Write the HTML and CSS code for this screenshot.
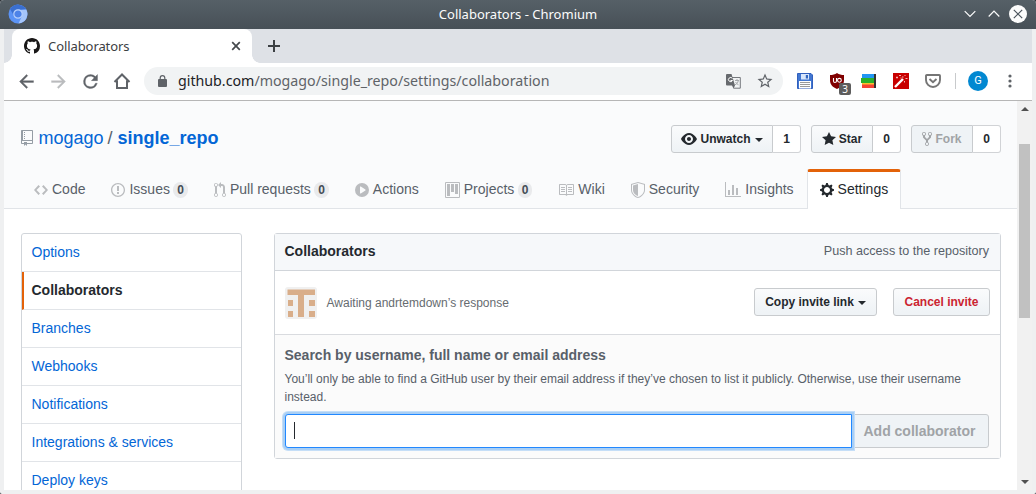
FILE: index.html
```html
<!DOCTYPE html>
<html lang="en">
<head>
<meta charset="utf-8">
<title>Collaborators</title>
<link rel="stylesheet" href="styles.css">
</head>
<body>
<div class="window">
  <header class="titlebar">
    <svg class="app-icon" width="20" height="20" viewBox="0 0 20 20"><circle cx="10" cy="10" r="9.5" fill="#5b93f5"/><path d="M2 5A9.500 9.500 0 0 1 18.300 5.500L10 5.500 5.800 11.500z" fill="#3a6fd0"/><path d="M18.300 5.500A9.500 9.500 0 0 1 10.500 19.500L14 12 13 6z" fill="#a5c5fa"/><circle cx="10" cy="10" r="4.200" fill="#4d83e8" stroke="#b8d0fb" stroke-width="1.200"/></svg>
    <span class="window-title">Collaborators - Chromium</span>
    <div class="window-controls">
      <svg width="12" height="8" viewBox="0 0 12 8"><path d="M.7 1.200L6 6.500l5.300-5.300" fill="none" stroke="#fcfcfc" stroke-width="1.200"/></svg>
      <svg width="12" height="8" viewBox="0 0 12 8"><path d="M.7 6.500L6 1.200l5.300 5.300" fill="none" stroke="#fcfcfc" stroke-width="1.200"/></svg>
      <svg width="18" height="18" viewBox="0 0 18 18"><circle cx="9" cy="9" r="9" fill="#fcfcfc"/><path d="M4.800 4.800l8.400 8.400M13.200 4.800l-8.400 8.400" stroke="#4b545c" stroke-width="1.200"/></svg>
    </div>
  </header>

  <div class="tabstrip">
    <div class="tab">
      <svg width="16" height="16" viewBox="0 0 16 16" fill="#191717"><path d="M8 0C3.580 0 0 3.580 0 8c0 3.540 2.290 6.530 5.470 7.590.4.070.55-.17.55-.38 0-.19-.01-.82-.01-1.490-2.010.37-2.530-.49-2.690-.94-.09-.23-.48-.94-.82-1.130-.28-.15-.68-.52-.01-.53.63-.01 1.080.58 1.230.82.72 1.210 1.870.87 2.330.66.070-.52.28-.87.51-1.070-1.780-.2-3.640-.89-3.640-3.950 0-.87.31-1.590.82-2.150-.08-.2-.36-1.020.08-2.120 0 0 .67-.21 2.200.82.64-.18 1.320-.27 2-.27s1.360.09 2 .27c1.530-1.040 2.200-.82 2.200-.82.44 1.100.16 1.920.08 2.120.51.56.82 1.270.82 2.150 0 3.070-1.870 3.750-3.650 3.950.29.25.54.73.54 1.480 0 1.070-.01 1.930-.01 2.200 0 .21.15.46.55.38A8.013 8.013 0 0 0 16 8c0-4.420-3.580-8-8-8z"/></svg>
      <span class="tab-title">Collaborators</span>
      <svg class="tab-close" width="10" height="10" viewBox="0 0 10 10"><path d="M1.200 1.200l7.600 7.600M8.800 1.200L1.200 8.800" stroke="#45494d" stroke-width="1.700"/></svg>
    </div>
    <svg class="new-tab" width="12" height="12" viewBox="0 0 12 12"><path d="M6 0v12M0 6h12" stroke="#3c4043" stroke-width="2"/></svg>
  </div>

  <div class="toolbar">
    <div class="tool"><svg width="21" height="21" viewBox="0 0 24 24" fill="#5f6368" stroke="#5f6368" stroke-width=".4"><path d="M20 11H7.830l5.590-5.590L12 4l-8 8 8 8 1.410-1.410L7.830 13H20v-2z"/></svg></div>
    <div class="tool"><svg width="21" height="21" viewBox="0 0 24 24" fill="#babcbe" stroke="#babcbe" stroke-width=".4"><path d="M12 4l-1.410 1.410L16.170 11H4v2h12.170l-5.580 5.590L12 20l8-8z"/></svg></div>
    <div class="tool"><svg width="21" height="21" viewBox="0 0 24 24" fill="#5f6368" stroke="#5f6368" stroke-width=".4"><path d="M17.650 6.350A7.960 7.960 0 0 0 12 4a8 8 0 1 0 7.730 10h-2.080A6 6 0 1 1 12 6c1.660 0 3.140.69 4.220 1.780L13 11h7V4l-2.350 2.350z"/></svg></div>
    <div class="tool"><svg width="18" height="18" viewBox="0 0 18 18" fill="none" stroke="#5f6368" stroke-width="2"><path d="M1.500 10L9 2.500l7.500 7.500M4 8.500V16h10V8.500"/></svg></div>
    <div class="omnibox">
      <svg width="9" height="12" viewBox="0 0 9 12"><rect y="4" width="9" height="8" rx="1" fill="#5f6368"/><path d="M2.200 5V3a2.300 2.300 0 0 1 4.600 0v2" fill="none" stroke="#5f6368" stroke-width="1.200"/></svg>
      <span class="url"><b>github.com</b>/mogago/single_repo/settings/collaboration</span>
      <svg class="translate" width="15" height="15" viewBox="0 0 15 15"><path d="M6 3.500h8.300v10.700H7.500" fill="#f1f3f4" stroke="#76797d"/><path d="M0 1a1 1 0 0 1 1-1h4.500L9 11.500H1a1 1 0 0 1-1-1zM6 11.500h3L7.500 14.500z" fill="#66696d"/><path d="M9 6.500h4M11 5v1.500m1.300 0C12 9 10.500 10 9 10.800M9.500 8l3 3.200" fill="none" stroke="#a5a8ab"/><path d="M6.400 4.500A2.100 2.100 0 1 0 6.500 6.500H4.500" fill="none" stroke="#fff"/></svg>
      <svg class="bookmark" width="18" height="18" viewBox="0 0 24 24" fill="#5f6368"><path d="M22 9.240l-7.190-.62L12 2 9.190 8.630 2 9.240l5.460 4.730L5.820 21 12 17.270 18.180 21l-1.630-7.030L22 9.240zM12 15.400l-3.760 2.270 1-4.280-3.320-2.880 4.380-.38L12 6.100l1.710 4.040 4.380.38-3.320 2.880 1 4.280L12 15.400z"/></svg>
    </div>
    <div class="extensions">
      <div class="tool"><svg width="16" height="16" viewBox="0 0 16 16"><path d="M.5.5H14l1.500 1.500v13.500H.5z" fill="#4277d1" stroke="#315fbd"/><path d="M4 1h8v5.500H4z" fill="#d8e6fb"/><path d="M8.800 2h2.200v3.500H8.800z" fill="#3265be"/><path d="M2 8h12v7.500H2z" fill="#fff"/><path d="M3 9.500h10M3 11.500h10M3 13.500h10" stroke="#9a9a9a"/></svg></div>
      <div class="tool ublock"><svg width="14" height="16" viewBox="0 0 14 16"><path d="M7 0c2 1.500 4.500 2 7 2v5c0 5-3 7.300-7 9C3 14.300 0 12 0 7V2c2.500 0 5-.5 7-2z" fill="#800000"/><path d="M3.500 5v3c0 1 .4 1.500 1.400 1.500S6.500 9 6.500 8V5" fill="none" stroke="#fff" stroke-width="1.100"/><circle cx="9.400" cy="7.300" r="1.900" fill="none" stroke="#fff" stroke-width="1.100"/></svg><span class="ext-badge">3</span></div>
      <div class="tool"><svg width="16" height="14" viewBox="0 0 16 14"><path d="M12 0h3v14h-3z" fill="#333"/><path d="M1 0h12v4H1z" fill="#2196f3"/><path d="M0 4h13v5H0z" fill="#2bb02b"/><path d="M1 9h12v2H1z" fill="#fbc02d"/><path d="M1 10.500h12V14H1z" fill="#f44336"/></svg></div>
      <div class="tool"><svg width="16" height="16" viewBox="0 0 16 16"><path d="M0 0h16v16H0z" fill="#c80000"/><path d="M2 14l8-8" stroke="#fff" stroke-width="2.400"/><path d="M3 4.500h2M4 3.500v2M6 2.500h2M9 4h1.500M11.500 2.500h1M12.500 5.500h2M11.500 8v1.500M7.500 5h1" stroke="#f4b3b3" stroke-width="1"/></svg></div>
      <div class="tool"><svg width="16" height="14" viewBox="0 0 16 14"><path d="M1 1.800C1 1.300 1.400 1 1.800 1h12.400c.5 0 .8.300.8.800V6a7 7 0 0 1-14 0z" fill="none" stroke="#757575" stroke-width="1.900"/><path d="M4.500 5L8 8.300 11.500 5" fill="none" stroke="#757575" stroke-width="1.900"/></svg></div>
    </div>
    <span class="tool-divider"></span>
    <span class="profile">G</span>
    <svg class="menu-dots" width="4" height="14" viewBox="0 0 4 14" fill="#5f6368"><circle cx="2" cy="2" r="1.600"/><circle cx="2" cy="7" r="1.600"/><circle cx="2" cy="12" r="1.600"/></svg>
  </div>

  <div class="viewport">
    <main class="page">
      <div class="repohead">
        <div class="repohead-top">
          <h1 class="repo-name"><svg width="12" height="16" viewBox="0 0 12 16"><path d="M4 9H3V8h1v1zm0-3H3v1h1V6zm0-2H3v1h1V4zm0-2H3v1h1V2zm8-1v12c0 .55-.45 1-1 1H6v2l-1.500-1.500L3 16v-2H1c-.55 0-1-.45-1-1V1c0-.55.45-1 1-1h10c.55 0 1 .45 1 1zm-1 10H1v2h2v-1h3v1h5v-2zm0-10H2v9h9V1z"/></svg><a>mogago</a><span class="slash">/</span><a class="repo">single_repo</a></h1>
          <div class="actions">
            <div class="btn-group watch"><button class="btn sm"><svg width="16" height="16" viewBox="0 0 16 16"><path fill-rule="evenodd" d="M8.060 2C3 2 0 8 0 8s3 6 8.060 6C13 14 16 8 16 8s-3-6-7.940-6zM8 12c-2.200 0-4-1.780-4-4 0-2.200 1.800-4 4-4 2.220 0 4 1.800 4 4 0 2.220-1.780 4-4 4zm2-4c0 1.110-.89 2-2 2-1.110 0-2-.89-2-2 0-1.110.89-2 2-2 1.110 0 2 .89 2 2z"/></svg>Unwatch<i class="caret"></i></button><span class="social-count">1</span></div>
            <div class="btn-group"><button class="btn sm"><svg width="14" height="16" viewBox="0 0 14 16"><path d="M14 6l-4.900-.64L7 1 4.900 5.360 0 6l3.600 3.260L2.670 14 7 11.670 11.330 14l-.93-4.740L14 6z"/></svg>Star</button><span class="social-count">0</span></div>
            <div class="btn-group"><button class="btn sm disabled"><svg width="10" height="16" viewBox="0 0 10 16"><path fill-rule="evenodd" d="M8 1a1.993 1.993 0 0 0-1 3.720V6L5 8 3 6V4.720A1.993 1.993 0 0 0 2 1a1.993 1.993 0 0 0-1 3.720V6.500l3 3v1.780A1.993 1.993 0 0 0 5 15a1.993 1.993 0 0 0 1-3.720V9.500l3-3V4.720A1.993 1.993 0 0 0 8 1zM2 4.200C1.340 4.200.8 3.650.8 3c0-.65.55-1.200 1.200-1.200.65 0 1.200.55 1.200 1.200 0 .65-.55 1.200-1.200 1.200zm3 10c-.66 0-1.200-.55-1.200-1.200 0-.65.55-1.200 1.200-1.200.65 0 1.200.55 1.200 1.200 0 .65-.55 1.200-1.200 1.200zm3-10c-.66 0-1.200-.55-1.200-1.200 0-.65.55-1.200 1.200-1.200.65 0 1.200.55 1.200 1.200 0 .65-.55 1.200-1.200 1.200z"/></svg>Fork</button><span class="social-count">0</span></div>
          </div>
        </div>
        <nav class="reponav">
          <a class="nav-item"><svg width="14" height="16" viewBox="0 0 14 16"><path d="M9.500 3L8 4.500 11.500 8 8 11.500 9.500 13 14 8 9.500 3zm-5 0L0 8l4.500 5L6 11.500 2.500 8 6 4.500 4.500 3z"/></svg><span>Code</span></a>
          <a class="nav-item"><svg width="14" height="16" viewBox="0 0 14 16"><path fill-rule="evenodd" d="M7 2.300c3.140 0 5.700 2.560 5.700 5.700s-2.560 5.700-5.700 5.700A5.710 5.710 0 0 1 1.300 8c0-3.140 2.560-5.700 5.700-5.700zM7 1C3.140 1 0 4.140 0 8s3.140 7 7 7 7-3.140 7-7-3.140-7-7-7zm1 3H6v5h2V4zm0 6H6v2h2v-2z"/></svg><span>Issues</span><span class="counter">0</span></a>
          <a class="nav-item"><svg width="12" height="16" viewBox="0 0 12 16"><path fill-rule="evenodd" d="M11 11.280V5c-.03-.78-.34-1.470-.94-2.060C9.460 2.350 8.780 2.030 8 2H7V0L4 3l3 3V4h1c.27.020.48.110.69.310.21.200.3.420.31.690v6.280A1.993 1.993 0 0 0 10 15a1.993 1.993 0 0 0 1-3.720zm-1 2.920c-.66 0-1.200-.55-1.200-1.200 0-.65.55-1.200 1.200-1.200.65 0 1.200.55 1.200 1.200 0 .65-.55 1.200-1.200 1.200zM4 3c0-1.110-.89-2-2-2a1.993 1.993 0 0 0-1 3.720v6.560A1.993 1.993 0 0 0 2 15a1.993 1.993 0 0 0 1-3.720V4.720c.59-.34 1-.98 1-1.720zm-.8 10c0 .66-.55 1.200-1.200 1.200-.65 0-1.200-.55-1.200-1.200 0-.65.55-1.200 1.200-1.200.65 0 1.200.55 1.200 1.200zM2 4.200C1.340 4.200.8 3.650.8 3c0-.65.55-1.200 1.200-1.200.65 0 1.200.55 1.200 1.200 0 .65-.55 1.200-1.200 1.200z"/></svg><span>Pull requests</span><span class="counter">0</span></a>
          <a class="nav-item"><svg width="14" height="16" viewBox="0 0 14 16"><path fill-rule="evenodd" d="M14 8A7 7 0 1 1 0 8a7 7 0 0 1 14 0zm-8.223 3.482l4.599-3.066a.5.5 0 0 0 0-.832L5.777 4.518A.5.5 0 0 0 5 4.934v6.132a.5.5 0 0 0 .777.416z"/></svg><span>Actions</span></a>
          <a class="nav-item"><svg width="15" height="16" viewBox="0 0 15 16"><path fill-rule="evenodd" d="M10 12h3V2h-3v10zm-4-2h3V2H6v8zm-4 4h3V2H2v12zm-1 1h13V1H1v14zM14 0H1a1 1 0 0 0-1 1v14a1 1 0 0 0 1 1h13a1 1 0 0 0 1-1V1a1 1 0 0 0-1-1z"/></svg><span>Projects</span><span class="counter">0</span></a>
          <a class="nav-item"><svg width="16" height="16" viewBox="0 0 16 16"><path fill-rule="evenodd" d="M3 5h4v1H3V5zm0 3h4V7H3v1zm0 2h4V9H3v1zm11-5h-4v1h4V5zm0 2h-4v1h4V7zm0 2h-4v1h4V9zm2-6v9c0 .55-.45 1-1 1H9.500l-1 1-1-1H2c-.55 0-1-.45-1-1V3c0-.55.45-1 1-1h5.500l1 1 1-1H15c.55 0 1 .45 1 1zm-8 .5L7.500 3H2v9h6V3.500zm7-.5H9.500l-.5.5V12h6V3z"/></svg><span>Wiki</span></a>
          <a class="nav-item"><svg width="14" height="16" viewBox="0 0 14 16"><path fill-rule="evenodd" d="M0 2l7-2 7 2v6.020C14 12.690 8.690 16 7 16c-1.690 0-7-3.310-7-7.980V2zm1 .75L7 1l6 1.750v5.268C13 12.104 8.449 15 7 15c-1.449 0-6-2.896-6-6.982V2.750zm1 .75L7 2v12c-1.207 0-5-2.482-5-5.985V3.500z"/></svg><span>Security</span></a>
          <a class="nav-item"><svg width="16" height="16" viewBox="0 0 16 16"><path d="M16 14v1H0V0h1v14h15zM5 13H3V8h2v5zm4 0H7V3h2v10zm4 0h-2V6h2v7z"/></svg><span>Insights</span></a>
          <a class="nav-item selected"><svg width="14" height="16" viewBox="0 0 14 16"><path fill-rule="evenodd" d="M14 8.770v-1.600l-1.940-.64-.45-1.090.88-1.840-1.130-1.130-1.810.91-1.090-.45-.69-1.920h-1.600l-.63 1.940-1.110.45-1.840-.88-1.130 1.130.91 1.810-.45 1.090L0 7.230v1.590l1.940.64.45 1.090-.88 1.840 1.130 1.130 1.810-.91 1.090.45.69 1.920h1.590l.63-1.940 1.110-.45 1.840.88 1.130-1.130-.92-1.810.47-1.090L14 8.750v.02zM7 11c-1.660 0-3-1.340-3-3s1.340-3 3-3 3 1.340 3 3-1.340 3-3 3z"/></svg><span>Settings</span></a>
        </nav>
      </div>

      <div class="columns">
        <nav class="side-menu">
          <a>Options</a>
          <a class="current">Collaborators</a>
          <a>Branches</a>
          <a>Webhooks</a>
          <a>Notifications</a>
          <a>Integrations &amp; services</a>
          <a>Deploy keys</a>
        </nav>
        <section class="box">
          <div class="box-header"><h3>Collaborators</h3><span>Push access to the repository</span></div>
          <div class="invite">
            <svg width="32" height="32" viewBox="0 0 32 32"><rect width="32" height="32" rx="3" fill="#f0f0f0"/><path d="M2.500 2.500h27.500v5.500H19v22h-6V8H2.500zM3 13h5v6H3zM24 13h6v6h-6zM3 24h5v6H3zM24 24h6v6h-6z" fill="#d9ae8a"/></svg>
            <span class="invite-text">Awaiting andrtemdown’s response</span>
            <button class="btn sm copy">Copy invite link<i class="caret"></i></button>
            <button class="btn sm danger">Cancel invite</button>
          </div>
          <div class="add-form">
            <h4>Search by username, full name or email address</h4>
            <p>You’ll only be able to find a GitHub user by their email address if they’ve chosen to list it publicly. Otherwise, use their username instead.</p>
            <div class="input-row"><div class="search-input"><i class="text-cursor"></i></div><button class="btn disabled add">Add collaborator</button></div>
          </div>
        </section>
      </div>
    </main>
    <div class="scrollbar">
      <i class="arrow up"></i>
      <i class="thumb"></i>
      <i class="arrow down"></i>
    </div>
  </div>
</div>
</body>
</html>
```

FILE: styles.css
```css
* { box-sizing: border-box; }
html { background: #30363b; }
body { margin: 0; font: 14px/21px "Liberation Sans", Arial, sans-serif; color: #24292e; overflow: hidden; }
svg { flex: none; display: block; }
button { margin: 0; }

.window { width: 1036px; height: 494px; display: flex; flex-direction: column; padding-bottom: 4px; background: #eff0f1; border-radius: 4px 4px 2px 2px; overflow: hidden; }

/* Window title bar */
.titlebar { height: 29px; flex: none; display: grid; grid-template-columns: 120px 1fr 120px; align-items: center; background: linear-gradient(#566067, #475057); color: #fcfcfc; font: 13px/18px "Noto Sans", sans-serif; }
.app-icon { margin: -1px 0 0 8px; }
.window-title { text-align: center; margin-top: -1px; }
.window-controls { display: flex; align-items: center; justify-content: flex-end; gap: 12px; padding-right: 9px; margin-top: -1px; }
.window-controls svg:last-child { margin-left: -3px; }

/* Tabs */
.tabstrip { height: 34px; flex: none; margin: 0 4px; padding-left: 8px; display: flex; align-items: center; background: #dee1e6; }
.tab { position: relative; width: 240px; height: 34px; display: flex; align-items: center; padding: 0 11px 0 12px; background: #fff; border-radius: 8px 8px 0 0; font: 13px/18px "Noto Sans", sans-serif; color: #3c4043; }
.tab::before, .tab::after { content: ""; position: absolute; bottom: 0; width: 8px; height: 8px; }
.tab::before { left: -8px; background: radial-gradient(circle at 0 0, transparent 7.500px, #fff 8px); }
.tab::after { right: -8px; background: radial-gradient(circle at 100% 0, transparent 7.500px, #fff 8px); }
.tab-title { margin-left: 8px; letter-spacing: -.08px; }
.tab-close { margin-left: auto; }
.new-tab { margin-left: 16px; }

/* Toolbar */
.toolbar { height: 38px; flex: none; margin: 0 4px; padding: 0 0 1px 6px; display: flex; align-items: center; background: #fff; border-bottom: 1px solid #b6b6b6; }
.tool { width: 32px; height: 28px; display: flex; align-items: center; justify-content: center; }
.omnibox { width: 639px; height: 28px; margin-left: 6px; padding: 0 9px 0 14px; display: flex; align-items: center; background: #f1f3f4; border-radius: 14px; font: 14.220px/20px "Noto Sans", sans-serif; color: #5f6368; }
.url { margin-left: 11px; white-space: nowrap; }
.url b { font-weight: 400; color: #202124; }
.translate { margin-left: auto; }
.bookmark { margin-left: 15px; }
.extensions { display: flex; margin-left: 6px; }
.ublock { position: relative; }
.ext-badge { position: absolute; left: 18px; top: 16px; width: 12px; height: 12px; border-radius: 2px; background: #5d5d5d; color: #fff; font: 10px/12px "Noto Sans", sans-serif; text-align: center; }
.tool-divider { width: 1px; height: 16px; margin-left: 6px; background: #c8cacc; }
.profile { width: 20px; height: 20px; margin-left: 12px; border-radius: 50%; background: #0288d1; color: #fff; font: 11px/20px Roboto, sans-serif; text-align: center; }
.menu-dots { margin-left: 20px; }

/* Page */
.viewport { flex: 1; min-height: 0; display: flex; margin: 0 4px; background: #fff; }
.page { flex: 1; min-width: 0; overflow: hidden; }
.repohead { height: 108px; background: #fafbfc; border-bottom: 1px solid #e1e4e8; padding: 24px 16px 0 17px; }
.repohead-top { display: flex; justify-content: space-between; height: 44px; }
.repo-name { margin: 0; display: flex; height: 27px; align-items: center; font-size: 18px; line-height: 27px; font-weight: 400; color: #0366d6; }
.repo-name svg { fill: #959da5; margin: -1px 5.500px 0 0; }
.slash { color: #586069; margin: 0 5px 0 4px; }
.repo { font-weight: 600; }
.actions { display: flex; gap: 10px; }
.btn-group { display: flex; width: 90px; height: 28px; }
.watch { width: 130px; }
.btn { display: flex; align-items: center; justify-content: center; border: 1px solid #c8cbce; border-radius: 3px; background: linear-gradient(#fafbfc, #eff3f6 90%); color: #24292e; font: 600 14px/20px "Liberation Sans", Arial, sans-serif; white-space: nowrap; }
.btn.sm { height: 28px; padding: 0 10px; font-size: 12px; }
.btn svg { fill: currentColor; margin-right: 3px; }
.btn.disabled { color: #a0a3a6; background: #eff3f6; }
.btn-group .btn { flex: 1; padding: 0; border-radius: 3px 0 0 3px; }
.social-count { width: 28px; height: 28px; text-align: center; border: 1px solid #d1d3d6; border-left: 0; border-radius: 0 3px 3px 0; background: #fff; font-size: 12px; line-height: 26px; font-weight: 600; }
.caret { border: 4px solid transparent; border-top-color: currentColor; border-bottom: 0; margin-left: 4px; margin-top: 1px; }
.reponav { display: flex; height: 40px; }
.nav-item { display: flex; align-items: center; padding: 0 12px 2px; border: 1px solid transparent; border-top: 3px solid transparent; border-bottom: 0; color: #586069; white-space: nowrap; border-radius: 3px 3px 0 0; }
.nav-item svg { fill: #babcbf; margin-right: 4px; }
.counter { margin-left: 3.300px; padding: 2px 4px; border-radius: 20px; background: #e9eaec; color: #444d56; font-size: 12px; line-height: 12px; font-weight: 600; }
.selected { background: #fff; border-color: #e36209 #e1e4e8 transparent; color: #24292e; }
.selected svg { fill: #24292e; }

.columns { display: flex; align-items: flex-start; gap: 32px; padding: 24px 16px 0 17px; }
.side-menu { width: 221px; border: 1px solid #d1d5da; border-radius: 3px; flex: none; }
.side-menu a { display: block; height: 38px; padding: 8px 9.500px; border-bottom: 1px solid #e1e4e8; color: #0366d6; line-height: 20px; }
.side-menu .current { color: #24292e; font-weight: 600; border-left: 2px solid #e36209; padding-left: 7.500px; }

.box { width: 727px; border: 1px solid #d1d5da; border-radius: 3px; }
.box-header { display: flex; align-items: center; justify-content: space-between; height: 37px; padding: 0 11px 2px 9.500px; background: #f6f8fa; border-bottom: 1px solid #d1d5da; }
.box-header h3 { margin: 0; font-size: 14px; }
.box-header span { font-size: 12.600px; color: #586069; }
.invite { display: flex; align-items: center; height: 64px; padding: 0 10px; border-bottom: 1px solid #d9dbdf; }
.invite-text { margin: 1px 0 0 9.500px; font-size: 12px; color: #666b70; }
.btn.copy { width: 123px; padding: 0; margin-left: auto; }
.btn.danger { width: 97px; padding: 0; margin-left: 16px; color: #cb2431; }
.invite .btn { margin-top: -1px; }
.add-form { height: 123px; padding: 10px 11px 0 10px; background: #fbfbfb; }
.add-form h4 { margin: 0 0 0 -.5px; font-size: 14px; line-height: 21px; color: #586069; }
.add-form p { margin: 4px 0 8px -.5px; font-size: 12px; line-height: 18px; color: #586069; }
.input-row { display: flex; height: 34px; }
.search-input { position: relative; z-index: 1; width: 567px; padding: 7px 8px; border: 1px solid #2188ff; border-radius: 3px 0 0 3px; background: #fff; box-shadow: 0 0 0 2px #a9cff5, 0 0 0 3px #c5def7; }
.text-cursor { display: block; width: 1px; height: 17px; background: #24292e; }
.add { flex: 1; margin-left: -1px; border-radius: 0 3px 3px 0; padding: 0 1px 0 0; }

/* Scrollbar */
.scrollbar { width: 15px; flex: none; display: flex; flex-direction: column; align-items: center; background: #f1f1f1; padding: 6px 0; }
.thumb { width: 11px; height: 174px; margin-top: 33px; background: #c1c1c1; }
.arrow { border: 4px solid transparent; }
.up { border-top: 0; border-bottom-color: #505050; }
.down { border-bottom: 0; border-top-color: #505050; margin-top: auto; }
```
